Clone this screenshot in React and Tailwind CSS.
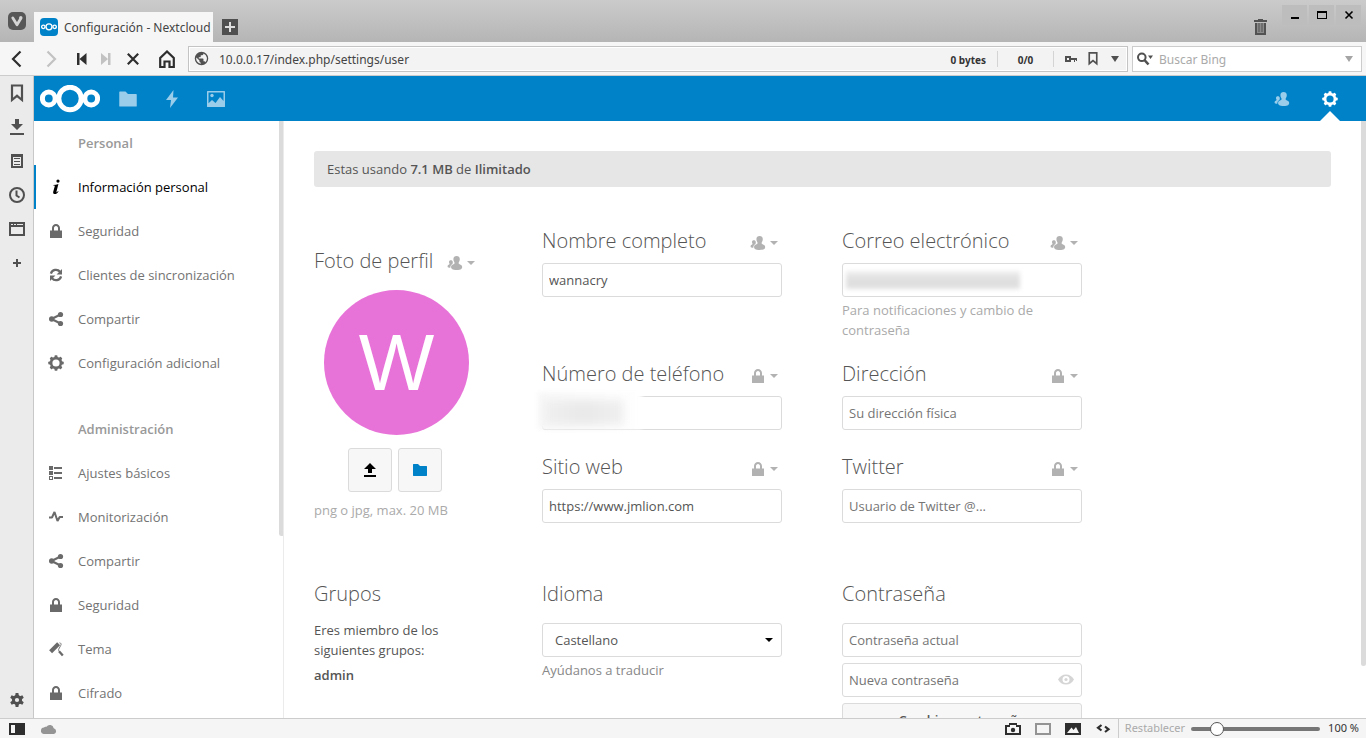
import React from 'react';

const TEETH = [0, 45, 90, 135, 180, 225, 270, 315];

function Gear({ className }) {
  return (
    <svg viewBox="0 0 16 16" className={className} aria-hidden="true">
      <circle cx="8" cy="8" r="4.9" fill="none" stroke="currentColor" strokeWidth="2.6" />
      {TEETH.map((a) => (
        <rect key={a} x="6.500" y="0.3" width="3" height="3" rx="0.8" fill="currentColor" transform={`rotate(${a} 8 8)`} />
      ))}
    </svg>
  );
}

function SolidGear({ className }) {
  return (
    <svg viewBox="0 0 16 16" className={className} aria-hidden="true">
      <circle cx="8" cy="8" r="3.6" fill="none" stroke="currentColor" strokeWidth="3" />
      {[0, 60, 120, 180, 240, 300].map((a) => (
        <path key={a} d="M6.100 4.200L6.600 1h2.800l.5 3.200z" fill="currentColor" transform={`rotate(${a} 8 8)`} />
      ))}
    </svg>
  );
}

function Lock({ className }) {
  return (
    <svg viewBox="0 0 16 16" className={className} aria-hidden="true">
      <path
        fill="currentColor"
        fillRule="evenodd"
        d="M8 1C5.700 1 4 2.900 4 5v2.400H2V15h12V7.400h-2V5c0-2.200-1.800-4-4-4zm0 2c1.200 0 2 1 2 2.100v2.300H6V5.100C6 4 6.800 3 8 3z"
      />
    </svg>
  );
}

function Sync({ className }) {
  return (
    <svg viewBox="0 0 16 16" className={className} aria-hidden="true">
      <g fill="none" stroke="currentColor" strokeWidth="2.200">
        <path d="M2.900 6.600A5.200 5.200 0 0 1 12 4.800" />
        <path d="M13.100 9.400A5.200 5.200 0 0 1 4 11.200" />
      </g>
      <path fill="currentColor" d="M14 2v5.400H8.600zM2 14V8.600h5.400z" />
    </svg>
  );
}

function Share({ className }) {
  return (
    <svg viewBox="0 0 16 16" className={className} aria-hidden="true">
      <path d="M12.500 3.500L3.500 8l9 4.500" fill="none" stroke="currentColor" strokeWidth="2.200" />
      <g fill="currentColor">
        <circle cx="12.500" cy="3.500" r="2.600" />
        <circle cx="3.700" cy="8" r="2.700" />
        <circle cx="12.500" cy="12.500" r="2.600" />
      </g>
    </svg>
  );
}

function Info({ className }) {
  return (
    <svg viewBox="0 0 16 16" className={className} aria-hidden="true">
      <circle cx="10" cy="2.100" r="1.600" fill="currentColor" />
      <path
        fill="currentColor"
        d="M10.400 5L8.500 12.400c-.2.900.1 1 .6.600.4-.3.700-.7 1-1.100l.4.300c-.9 1.700-2 2.900-3.600 2.900-1.400 0-2-.9-1.700-2.300l1.500-5.300c.2-.7-.1-.9-.6-.9H5.300l.1-.6c1.700-.1 3.300-.5 5-1z"
      />
    </svg>
  );
}

function ListIcon({ className }) {
  return (
    <svg viewBox="0 0 16 16" className={className} aria-hidden="true" shapeRendering="crispEdges">
      <path fill="currentColor" d="M1 1h4v4H1zM1 6h4v4H1zM6 2h8v2H6zM6 7h8v2H6zM6 12h8v2H6z" />
      <path fill="currentColor" fillRule="evenodd" d="M1 11h4v4H1zM2 12v2h2v-2z" />
    </svg>
  );
}

function Pulse({ className }) {
  return (
    <svg viewBox="0 0 16 16" className={className} aria-hidden="true">
      <path d="M1 8.500h3L6.500 3l3 9 2.200-4H15" fill="none" stroke="currentColor" strokeWidth="2" strokeLinejoin="bevel" />
    </svg>
  );
}

function Roller({ className }) {
  return (
    <svg viewBox="0 0 16 16" className={className} aria-hidden="true">
      <path d="M2.600 10.800L10.600 2.800" fill="none" stroke="currentColor" strokeWidth="4.200" />
      <path d="M11.500 1.800c1.800.4 2 1.300 1.200 2.700L10.800 8c-.5 1-.2 1.800.5 2.400" fill="none" stroke="currentColor" strokeWidth="0.900" />
      <path d="M11 10.300l3.800 4.200" fill="none" stroke="currentColor" strokeWidth="2.300" />
    </svg>
  );
}

function Contacts({ className }) {
  return (
    <svg viewBox="0 0 16 16" className={className} aria-hidden="true">
      <path
        fill="currentColor"
        d="M9.600 1C7.700 1 6.400 2.200 6.400 3.900c0 1 .2 2 .7 2.800.3.500.5.900.5 1.400 0 .7-.5 1-1.400 1.300-1 .3-1.900.8-2 1.700-.2 1.400-.2 2.200.8 2.800C6 14.600 7.700 15 9.700 15s3.700-.4 4.600-1.100c.9-.6 1-1.400.7-2.800-.2-.9-1-1.400-2.100-1.700-.9-.3-1.300-.6-1.300-1.300 0-.5.200-.9.500-1.400.5-.8.700-1.800.7-2.800C12.800 2.200 11.500 1 9.600 1z"
      />
      <path
        fill="currentColor"
        d="M3.800 5.200c-1.100 0-1.800.7-1.800 1.700 0 .6.200 1.200.5 1.700.1.800-.2 1-.8 1.200-.8.300-1.200.8-1.100 1.900.1.700 1.200 1.100 2.700 1.100.1-2.300 1-3.300 2.300-3.800-.1-.3-.1-.3 0-.6.200-.5.200-1 .2-1.500-.1-1-.9-1.700-2-1.700z"
      />
    </svg>
  );
}

function Folder({ className }) {
  return (
    <svg viewBox="0 0 16 16" className={className} aria-hidden="true">
      <path fill="currentColor" d="M1.500 2C1.200 2 1 2.200 1 2.500v11c0 .3.200.5.500.5h13c.3 0 .5-.2.500-.5v-9c0-.3-.2-.5-.5-.5H8L6 2z" />
    </svg>
  );
}

function Bookmark({ className }) {
  return (
    <svg viewBox="0 0 16 20" className={className} aria-hidden="true">
      <path d="M3 2.500h10v14.500l-5-4.200L3 17z" fill="none" stroke="currentColor" strokeWidth="2.200" />
    </svg>
  );
}

function Down({ className }) {
  return (
    <svg viewBox="0 0 8 6" className={className} aria-hidden="true">
      <path fill="currentColor" d="M0 0h8L4 6z" />
    </svg>
  );
}

function Caret({ className }) {
  return (
    <svg viewBox="0 0 8 4" className={className} aria-hidden="true">
      <path fill="currentColor" d="M0 0h8L4 4z" />
    </svg>
  );
}

function Logo({ className }) {
  return (
    <svg viewBox="0 0 60 28" className={className} aria-hidden="true">
      <g fill="none" stroke="currentColor" strokeWidth="5">
        <circle cx="30" cy="13.500" r="11.200" />
        <circle cx="8.800" cy="13.500" r="6.400" />
        <circle cx="51.200" cy="13.500" r="6.400" />
      </g>
    </svg>
  );
}

function TabStrip() {
  return (
    <div className="flex h-[42px] shrink-0 items-start bg-gradient-to-b from-[#cbcbcb] to-[#b5b5b5]">
      <button aria-label="Menú" className="mt-3 ml-2 size-[18px]">
        <svg viewBox="0 0 18 18" className="size-[18px]">
          <rect width="18" height="18" rx="5" fill="#575757" />
          <path d="M4.800 6L9 12.800 12.800 6.500" fill="none" stroke="#d4d4d4" strokeWidth="2.800" strokeLinecap="round" strokeLinejoin="round" />
          <circle cx="12.800" cy="5.700" r="1.700" fill="#d4d4d4" />
        </svg>
      </button>
      <div className="mt-3 ml-2 flex h-[30px] w-[179px] items-center gap-1.5 bg-[#f6f6f6] pl-1.5">
        <span className="flex size-[18px] shrink-0 items-center justify-center rounded-sm bg-[#0082c9] text-white">
          <Logo className="h-2 w-4" />
        </span>
        <span className="pt-0.5 text-[12px]/5 whitespace-nowrap text-[#444]">Configuración - Nextcloud</span>
      </div>
      <button aria-label="Nueva pestaña" className="mt-[19px] ml-[9px] size-4">
        <svg viewBox="0 0 16 16" className="size-4">
          <path fill="#4f4f4f" d="M0 0h16v16H0z" />
          <path fill="#ddd" d="M7 3h2v4h4v2H9v4H7V9H3V7h4z" />
        </svg>
      </button>
      <div className="ml-auto flex pr-[5px]">
        <button aria-label="Papelera" className="mt-[19px] mr-[15px] h-4 w-[13px]">
          <svg viewBox="0 0 13 16" className="h-4 w-[13px]">
            <path fill="#8a8a8a" d="M2 4h9v11H2z" />
            <path fill="#525252" d="M4 0h5v1h4v2H0V1h4zM1 4h2v10h7V4h2v12H1zM4.500 4h1v9h-1zM7.500 4h1v9h-1z" />
          </svg>
        </button>
        <div className="mt-[5px] flex gap-0.5">
          <button aria-label="Minimizar" className="h-5 w-[25px] bg-[#bdbdbd]">
            <svg viewBox="0 0 25 20" className="h-5 w-[25px]"><path d="M9 12h8v2H9z" /></svg>
          </button>
          <button aria-label="Maximizar" className="h-5 w-[25px] bg-[#bdbdbd]">
            <svg viewBox="0 0 25 20" className="h-5 w-[25px]"><path fillRule="evenodd" d="M8 6h10v8H8zM9 8v5h8V8z" /></svg>
          </button>
          <button aria-label="Cerrar" className="h-5 w-[25px] bg-[#bdbdbd]">
            <svg viewBox="0 0 25 20" className="h-5 w-[25px]"><path d="M9.500 6.500l7 7m0-7l-7 7" stroke="#000" strokeWidth="1.600" /></svg>
          </button>
        </div>
      </div>
    </div>
  );
}

function Toolbar() {
  return (
    <div className="flex h-[34px] shrink-0 items-center border-b border-[#ccc] bg-[#f6f6f6] pr-1 text-[#2e2e2e]">
      <div className="flex w-[188px] shrink-0 items-center pl-2">
        <button aria-label="Atrás" className="w-[17px]">
          <svg viewBox="0 0 17 20" className="h-5 w-[17px]"><path d="M12.500 2.500L5 10l7.500 7.500" fill="none" stroke="currentColor" strokeWidth="2.200" /></svg>
        </button>
        <button aria-label="Adelante" className="ml-[18px] w-[17px] text-[#c2c2c2]">
          <svg viewBox="0 0 17 20" className="h-5 w-[17px]"><path d="M4.500 2.500L12 10l-7.500 7.500" fill="none" stroke="currentColor" strokeWidth="2.200" /></svg>
        </button>
        <button aria-label="Rebobinar" className="ml-[17px] w-[10px]">
          <svg viewBox="0 0 10 12" className="h-3 w-[10px]"><path fill="currentColor" d="M0 0h2.500v12H0zM9.500 0v12L2.500 6z" /></svg>
        </button>
        <button aria-label="Avance rápido" className="ml-[14px] w-[10px] text-[#c2c2c2]">
          <svg viewBox="0 0 10 12" className="h-3 w-[10px]"><path fill="currentColor" d="M7 0h2.500v12H7zM0 0v12l7-6z" /></svg>
        </button>
        <button aria-label="Detener" className="ml-[16px] w-3">
          <svg viewBox="0 0 12 12" className="size-3"><path d="M.8.8l10.400 10.400M11.200.8L.8 11.200" stroke="currentColor" strokeWidth="2.200" /></svg>
        </button>
        <button aria-label="Inicio" className="ml-5 w-4">
          <svg viewBox="0 0 16 18" className="h-[18px] w-4"><path d="M1.200 17V8L8 1.500 14.800 8v9H10.500v-5.500h-5V17z" fill="none" stroke="currentColor" strokeWidth="2.200" /></svg>
        </button>
      </div>
      <div className="flex h-[26px] min-w-0 flex-1 items-center border border-[#c4c4c4] bg-[#f3f3f3] pl-[5px] text-[#505050] ring-1 ring-white ring-inset">
        <svg viewBox="0 0 16 16" className="size-[15px]" aria-hidden="true">
          <path
            fill="currentColor"
            fillRule="evenodd"
            d="M8 .8a7.200 7.200 0 1 0 0 14.400A7.200 7.200 0 0 0 8 .8zM7.200 13.700A5.700 5.700 0 0 1 2.500 6.800l3.300 3.400v.7c0 .8.600 1.400 1.400 1.400zm5-1.800c-.2-.6-.7-1-1.400-1h-.7V8.700c0-.4-.3-.7-.7-.7H5.100V6.600h1.400c.4 0 .7-.4.7-.7V4.400h1.500c.8 0 1.400-.6 1.400-1.400v-.3a5.700 5.700 0 0 1 2.100 9.200z"
          />
        </svg>
        <input aria-label="Dirección web" defaultValue="10.0.0.17/index.php/settings/user" className="min-w-0 flex-1 bg-transparent pt-0.5 pl-2.5 text-[12px]/5 text-[#444] outline-none" />
        <span className="mr-[11px] pt-0.5 text-[10px]/5 font-bold whitespace-nowrap text-[#333]">0 bytes</span>
        <span className="h-4 w-px bg-[#d4d4d4]" />
        <span className="w-[55px] pt-0.5 text-center text-[10px]/5 font-bold text-[#333]">0/0</span>
        <span className="h-4 w-px bg-[#d4d4d4]" />
        <button aria-label="Contraseñas" className="ml-[11px] w-3">
          <svg viewBox="0 0 12 8" className="h-2 w-3"><path fill="currentColor" fillRule="evenodd" d="M0 1h6v2h6v3h-1V5h-1v2H9V5H6v2H0zM2 3v2h2V3z" /></svg>
        </button>
        <button aria-label="Marcador" className="ml-[10px] w-3"><Bookmark className="h-[15px] w-3" /></button>
        <button aria-label="Historial" className="mr-2 ml-3 w-2"><Down className="h-[6px] w-2" /></button>
      </div>
      <div className="ml-1 flex h-[26px] w-[230px] shrink-0 items-center border border-[#ccc] bg-white px-1 text-[#505050]">
        <button aria-label="Motor de búsqueda">
          <svg viewBox="0 0 17 14" className="h-[14px] w-[17px]">
            <circle cx="4.800" cy="5.300" r="3.800" fill="none" stroke="currentColor" strokeWidth="2" />
            <path d="M7.500 8l4 4.500" stroke="currentColor" strokeWidth="2.600" />
            <path fill="currentColor" d="M11 3.500h5L13.500 7z" />
          </svg>
        </button>
        <input aria-label="Buscar" placeholder="Buscar Bing" className="min-w-0 flex-1 bg-transparent pt-0.5 pl-[5px] text-[12px]/5 outline-none placeholder:text-[#aaa]" />
        <Down className="mr-1 h-[6px] w-2 text-[#a5a5a5]" />
      </div>
    </div>
  );
}

const panelButton = 'flex h-[34px] w-full items-center justify-center';

function PanelBar() {
  return (
    <aside className="flex w-[34px] shrink-0 flex-col border-r border-[#c8c8c8] bg-[#ebebeb] text-[#505050]">
      <button aria-label="Marcadores" className={panelButton}><Bookmark className="h-5 w-4" /></button>
      <button aria-label="Descargas" className={panelButton}>
        <svg viewBox="0 0 14 16" className="h-4 w-[14px]"><path fill="currentColor" d="M5 0h4v5h4l-6 6-6-6h4zM0 14h14v2H0z" /></svg>
      </button>
      <button aria-label="Notas" className={panelButton}>
        <svg viewBox="0 0 12 14" className="h-[14px] w-3"><path fill="currentColor" fillRule="evenodd" d="M0 0h12v14H0zM2 3v9h8V3zM3 4h6v1H3zM3 7h6v1H3zM3 10h6v1H3z" /></svg>
      </button>
      <button aria-label="Historial" className={panelButton}>
        <svg viewBox="0 0 16 16" className="size-4" fill="none" stroke="currentColor" strokeWidth="2"><circle cx="8" cy="8" r="7" /><path d="M7.500 3.500V8.500l3 2" /></svg>
      </button>
      <button aria-label="Ventanas" className={panelButton}>
        <svg viewBox="0 0 16 14" className="h-[14px] w-4"><path fill="currentColor" fillRule="evenodd" d="M0 0h16v14H0zM2 5v7h12V5zM2 2v1h2V2zM5 2v1h2V2zM8 2v1h6V2z" /></svg>
      </button>
      <button aria-label="Añadir panel" className={panelButton}>
        <svg viewBox="0 0 8 8" className="size-2"><path fill="currentColor" d="M3 0h2v3h3v2H5v3H3V5H0V3h3z" /></svg>
      </button>
      <button aria-label="Ajustes" className="mt-auto flex h-9 w-full items-center justify-center"><SolidGear className="size-4" /></button>
    </aside>
  );
}

function Header() {
  return (
    <header className="flex h-[45px] shrink-0 items-stretch bg-[#0082c9] pr-3 pl-1.5 text-white">
      <a href="#inicio" aria-label="Nextcloud" className="flex items-center"><Logo className="h-7 w-[60px]" /></a>
      <nav className="ml-1.5 flex text-[#99cdea]">
        <a href="#archivos" aria-label="Archivos" className="flex w-11 items-center justify-center"><Folder className="size-5" /></a>
        <a href="#actividad" aria-label="Actividad" className="flex w-11 items-center justify-center">
          <svg viewBox="0 0 14 20" className="h-5 w-[14px]"><path fill="currentColor" d="M8.500 1L1 11h5l-1 8 8-10.500H8z" /></svg>
        </a>
        <a href="#galeria" aria-label="Galería" className="flex w-11 items-center justify-center">
          <svg viewBox="0 0 18 16" className="h-4 w-[18px]">
            <path fill="currentColor" fillRule="evenodd" d="M.6 0h16.800c.4 0 .6.200.6.600v14.800c0 .4-.2.600-.6.600H.6c-.4 0-.6-.2-.6-.6V.6C0 .2.200 0 .6 0zM1.500 1.500v10.800L5 9l3.500 3L13 6l3.500 4V1.500z" />
            <circle cx="5" cy="4.500" r="1.700" fill="currentColor" />
          </svg>
        </a>
      </nav>
      <div className="ml-auto flex">
        <a href="#contactos" aria-label="Contactos" className="flex w-12 items-center justify-center text-[#99cdea]"><Contacts className="size-4" /></a>
        <a href="#ajustes" aria-label="Ajustes" className="relative flex w-12 items-center justify-center">
          <Gear className="size-4" />
          <svg viewBox="0 0 20 10" className="absolute bottom-0 left-[14px] h-[10px] w-5"><path fill="#fff" d="M0 10L10 0l10 10z" /></svg>
        </a>
      </div>
    </header>
  );
}

function NavSection({ title, items, className }) {
  return (
    <section className={className}>
      <h3 className="flex h-11 items-center pl-11 font-semibold text-[#999]">{title}</h3>
      <ul>
        {items.map(({ label, Icon, active }) => (
          <li key={label}>
            <a
              href="#seccion"
              className={
                active
                  ? 'flex h-11 items-center gap-[14px] border-l-2 border-[#0082c9] pl-3 text-black'
                  : 'flex h-11 items-center gap-[14px] pl-[14px] text-[#737373]'
              }
            >
              <Icon className={active ? 'size-4' : 'size-4 text-[#6a6a6a]'} />
              {label}
            </a>
          </li>
        ))}
      </ul>
    </section>
  );
}

const personal = [
  { label: 'Información personal', Icon: Info, active: true },
  { label: 'Seguridad', Icon: Lock },
  { label: 'Clientes de sincronización', Icon: Sync },
  { label: 'Compartir', Icon: Share },
  { label: 'Configuración adicional', Icon: Gear },
];

const admin = [
  { label: 'Ajustes básicos', Icon: ListIcon },
  { label: 'Monitorización', Icon: Pulse },
  { label: 'Compartir', Icon: Share },
  { label: 'Seguridad', Icon: Lock },
  { label: 'Tema', Icon: Roller },
  { label: 'Cifrado', Icon: Lock },
];

function Scope({ Icon }) {
  return (
    <button aria-label="Visibilidad" className="flex items-center gap-1 pt-1 text-[#b2b2b2]">
      <Icon className="size-4" />
      <Caret className="h-1 w-2" />
    </button>
  );
}

const inputClass =
  'h-[34px] w-full rounded-[3px] border border-[#dbdbdb] bg-white px-1.5 text-[13px] text-[#555] outline-none placeholder:text-[#757575]';

function Field({ id, title, Icon, value, placeholder, hint, children }) {
  return (
    <div className="min-h-[74px] w-60">
      <div className="mb-[7px] flex h-[30px] items-center justify-between pr-1">
        <label htmlFor={id} className="text-[20px] font-light whitespace-nowrap text-[#555]">{title}</label>
        <Scope Icon={Icon} />
      </div>
      <div className="relative">
        <input id={id} defaultValue={value} placeholder={placeholder} className={inputClass} />
        {children}
      </div>
      {hint && <p className="mt-[3px] text-[#aaa]">{hint}</p>}
    </div>
  );
}

function Settings() {
  return (
    <main className="min-w-0 flex-1 overflow-hidden pt-[30px] pr-[30px] pl-[30px]">
      <p className="flex h-9 items-center rounded-[3px] bg-[#e6e6e6] pl-[13px] text-[#555]">
        <span>Estas usando <strong className="font-semibold">7.1 MB</strong> de <strong className="font-semibold">Ilimitado</strong></span>
      </p>
      <div className="mt-[39px] grid grid-cols-[228px_auto] justify-start">
        <div className="pt-5">
          <div className="flex h-[30px] items-center gap-[14px]">
            <h2 className="text-[20px] font-light whitespace-nowrap text-[#555]">Foto de perfil</h2>
            <Scope Icon={Contacts} />
          </div>
          <div className="mt-[14px] ml-2.5 flex size-[145px] items-center justify-center rounded-full bg-[#e873d8] font-['Liberation_Sans',sans-serif] text-[80px] leading-none text-white">W</div>
          <div className="mt-[13px] ml-[34px] flex gap-1.5">
            <button aria-label="Subir imagen" className="flex size-11 items-center justify-center rounded-[3px] border border-[#dbdbdb] bg-[#f7f7f7]">
              <svg viewBox="0 0 12 14" className="h-[14px] w-3"><path d="M6 0l6 6H8v4H4V6H0zM0 12h12v2H0z" /></svg>
            </button>
            <button aria-label="Seleccionar de archivos" className="flex size-11 items-center justify-center rounded-[3px] border border-[#dbdbdb] bg-[#f7f7f7] text-[#0082c9]">
              <Folder className="size-4" />
            </button>
          </div>
          <p className="mt-2 whitespace-nowrap text-[#aaa]">png o jpg, max. 20 MB</p>
        </div>
        <div className="grid grid-cols-[240px_240px] content-start gap-x-[60px] gap-y-[19px]">
          <Field id="nombre" title="Nombre completo" Icon={Contacts} value="wannacry" />
          <Field id="correo" title="Correo electrónico" Icon={Contacts} hint="Para notificaciones y cambio de contraseña">
            <span className="absolute top-2 left-1 h-[18px] w-[174px] bg-gradient-to-b from-[#f0f0f0] via-[#dedede] to-[#e2e2e2] blur-[2px]" />
          </Field>
          <Field id="telefono" title="Número de teléfono" Icon={Lock}>
            <span className="absolute -top-1 -left-1 h-[37px] w-[104px] bg-gradient-to-r from-[#f8f8f8] to-white blur-[2px]" />
            <span className="absolute top-1 left-0.5 h-[25px] w-20 bg-gradient-to-r from-[#f0f0f0] via-[#e9e9e9] to-[#f0f0f0] blur-[4px]" />
          </Field>
          <Field id="direccion" title="Dirección" Icon={Lock} placeholder="Su dirección física" />
          <Field id="web" title="Sitio web" Icon={Lock} value="https://www.jmlion.com" />
          <Field id="twitter" title="Twitter" Icon={Lock} placeholder="Usuario de Twitter @..." />
        </div>
      </div>
      <div className="mt-[53px] grid grid-cols-[228px_300px_240px] justify-start text-[#555]">
        <section>
          <h2 className="text-[20px] leading-[30px] font-light">Grupos</h2>
          <p className="mt-[11px] w-[150px]">Eres miembro de los siguientes grupos:</p>
          <p className="mt-[5px] font-semibold">admin</p>
        </section>
        <section className="w-60">
          <label htmlFor="idioma" className="block text-[20px] leading-[30px] font-light">Idioma</label>
          <div className="relative mt-[14px]">
            <select id="idioma" className="h-[34px] w-full appearance-none rounded-[3px] border border-[#dbdbdb] bg-white pl-3 text-[13px] outline-none">
              <option>Castellano</option>
            </select>
            <Caret className="pointer-events-none absolute top-[15px] right-[9px] h-1 w-2 text-black" />
          </div>
          <a href="#traducir" className="mt-[3px] block text-[#888]">Ayúdanos a traducir</a>
        </section>
        <section>
          <h2 className="text-[20px] leading-[30px] font-light">Contraseña</h2>
          <div className="mt-[14px] flex flex-col gap-1.5">
            <input type="password" aria-label="Contraseña actual" placeholder="Contraseña actual" className={inputClass} />
            <div className="relative">
              <input type="password" aria-label="Nueva contraseña" placeholder="Nueva contraseña" className={inputClass} />
              <button aria-label="Mostrar contraseña" className="absolute top-[11px] right-2 text-[#d5d5d5]">
                <svg viewBox="0 0 16 11" className="h-[11px] w-4">
                  <path fill="currentColor" fillRule="evenodd" d="M8 .5C4.500.5 1.500 2.500 0 5.500c1.500 3 4.500 5 8 5s6.500-2 8-5c-1.500-3-4.500-5-8-5zM8 2a3.500 3.500 0 1 1 0 7 3.500 3.500 0 0 1 0-7z" />
                  <circle cx="8" cy="5.500" r="1.600" fill="currentColor" />
                </svg>
              </button>
            </div>
            <button className="h-[34px] w-full rounded-[3px] border border-[#dbdbdb] bg-[#f7f7f7] text-[13px]/5 font-semibold">Cambiar contraseña</button>
          </div>
        </section>
      </div>
    </main>
  );
}

function StatusBar() {
  return (
    <footer className="flex h-5 shrink-0 items-center border-t border-[#ccc] bg-[#f5f5f5] pr-[7px] pl-[9px] text-[#2e2e2e]">
      <button aria-label="Panel lateral">
        <svg viewBox="0 0 16 12" className="h-3 w-4"><path fill="currentColor" fillRule="evenodd" d="M0 0h16v12H0zM2 2v8h4V2z" /></svg>
      </button>
      <button aria-label="Sincronización" className="ml-4">
        <svg viewBox="0 0 16 10" className="h-[10px] w-4"><path fill="#949494" d="M3.300 10a3.200 3.200 0 0 1-.4-6.400C3.400 2.900 4.600 2.500 5.500 2.700A4 4 0 0 1 12.700 4.200 3 3 0 0 1 13 10z" /></svg>
      </button>
      <div className="ml-auto flex items-center gap-[14px]">
        <button aria-label="Captura">
          <svg viewBox="0 0 16 12" className="h-3 w-4"><path fill="currentColor" fillRule="evenodd" d="M0 2h4V0h8v2h4v10H0zM2 4v6h12V4h-3V2H5v2z" /><circle cx="8" cy="7" r="2.200" fill="currentColor" /></svg>
        </button>
        <button aria-label="Mosaico">
          <svg viewBox="0 0 16 12" className="h-3 w-4"><path fill="#949494" fillRule="evenodd" d="M0 0h16v12H0zM2 2v8h12V2z" /></svg>
        </button>
        <button aria-label="Imágenes">
          <svg viewBox="0 0 16 12" className="h-3 w-4"><path fill="currentColor" fillRule="evenodd" d="M0 0h16v12H0zM2 10h12l-3-6-2.500 3L6.500 4.500z" /></svg>
        </button>
        <button aria-label="Acciones de página">
          <svg viewBox="0 0 16 12" className="h-3 w-4" fill="none" stroke="currentColor" strokeWidth="2.200"><path d="M6.500 2L3 4.800l3.500 2.700M10 3.500l3.500 2.800L10 9" /></svg>
        </button>
      </div>
      <div className="ml-[7px] flex h-full items-center border-l border-[#ccc] pl-1.5 text-[11px] whitespace-nowrap">
        <button className="text-[#aaa]">Restablecer</button>
        <input
          type="range"
          aria-label="Zoom"
          min="0"
          max="100"
          defaultValue="16"
          className="ml-1.5 h-1 w-[129px] appearance-none rounded-full bg-[#767676] [&::-webkit-slider-thumb]:size-[14px] [&::-webkit-slider-thumb]:appearance-none [&::-webkit-slider-thumb]:rounded-full [&::-webkit-slider-thumb]:border [&::-webkit-slider-thumb]:border-[#555] [&::-webkit-slider-thumb]:bg-white"
        />
        <span className="ml-2 text-[#333]">100 %</span>
      </div>
    </footer>
  );
}

export default function App() {
  return (
    <div className="flex h-screen flex-col overflow-hidden bg-white font-['Noto_Sans',sans-serif]">
      <TabStrip />
      <Toolbar />
      <div className="flex min-h-0 flex-1">
        <PanelBar />
        <div className="flex min-w-0 flex-1 flex-col font-['Open_Sans',sans-serif] text-[13px]/5">
          <Header />
          <div className="flex min-h-0 flex-1">
            <div className="flex w-[250px] shrink-0 overflow-hidden border-r border-[#ebebeb]">
              <nav className="min-w-0 flex-1">
                <NavSection title="Personal" items={personal} />
                <NavSection title="Administración" items={admin} className="mt-[22px]" />
              </nav>
              <div className="-mr-px h-[415px] w-[5px] shrink-0 rounded-b-[3px] bg-[#dbdbdb]" />
            </div>
            <Settings />
            <div className="h-[545px] w-[5px] shrink-0 rounded-b-[3px] bg-[#dbdbdb]" />
          </div>
        </div>
      </div>
      <StatusBar />
    </div>
  );
}
